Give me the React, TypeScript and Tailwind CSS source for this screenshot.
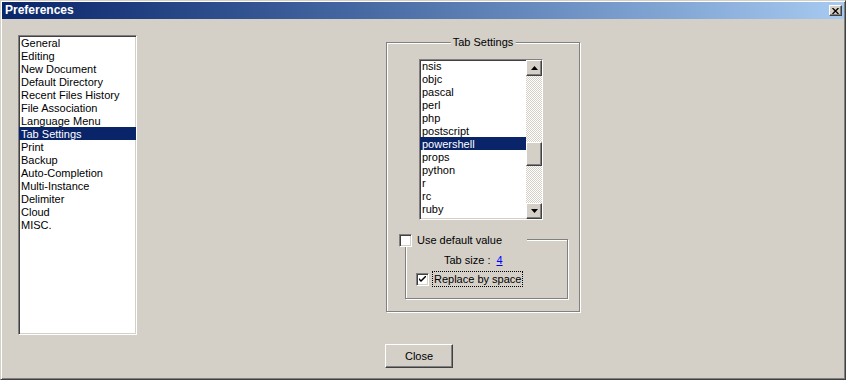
import React from 'react';

const CATEGORIES = [
  'General', 'Editing', 'New Document', 'Default Directory', 'Recent Files History',
  'File Association', 'Language Menu', 'Tab Settings', 'Print', 'Backup',
  'Auto-Completion', 'Multi-Instance', 'Delimiter', 'Cloud', 'MISC.',
];

const LANGS = ['nsis', 'objc', 'pascal', 'perl', 'php', 'postscript', 'powershell', 'props', 'python', 'r', 'rc', 'ruby'];

// classic raised / sunken 3d edges
const raised = 'border border-t-white border-l-white border-r-[#404040] border-b-[#404040] shadow-[inset_-1px_-1px_0_#808080] bg-[#d4d0c8]';
const sunken = 'border border-t-[#808080] border-l-[#808080] border-r-white border-b-white shadow-[inset_1px_1px_0_#404040,inset_-1px_-1px_0_#d4d0c8]';
const etched = 'border border-[#808080] shadow-[inset_1px_1px_0_#fff,1px_1px_0_#fff]';
const checker = 'bg-[image:repeating-conic-gradient(#fff_0_25%,#d4d0c8_0_50%)] bg-[length:2px_2px]';

const Arrow = ({ up }: { up?: boolean }) => (
  <svg width="7" height="4" viewBox="0 0 7 4" className="block">
    {up ? <path d="M3.5 0 L7 4 L0 4 Z" fill="#000" /> : <path d="M0 0 L7 0 L3.5 4 Z" fill="#000" />}
  </svg>
);

const CheckBox = ({ checked }: { checked?: boolean }) => (
  <div className={`w-[13px] h-[13px] bg-white ${sunken} flex items-center justify-center shrink-0`}>
    {checked && (
      <svg width="7" height="7" viewBox="0 0 7 7" className="block">
        <path d="M0 2 L0 4 L2 6 L7 1 L7 -1 L2 4 Z" fill="#000" />
      </svg>
    )}
  </div>
);

export default function App() {
  return (
    <div className="w-[846px] h-[380px] bg-[#d4d0c8] border border-t-[#d4d0c8] border-l-[#d4d0c8] border-r-[#404040] border-b-[#404040] shadow-[inset_1px_1px_0_#fff,inset_-1px_-1px_0_#808080] p-[1px] flex flex-col font-['Liberation_Sans',Arial,sans-serif] text-[11px] text-black leading-[13px] overflow-hidden">
      {/* Title bar */}
      <div className="h-[17px] flex items-center justify-between bg-gradient-to-r from-[#0a246a] to-[#a6caf0] pl-[3px] pr-[2px]">
        <span className="text-white font-bold text-[12px] leading-[15px]">Preferences</span>
        <div className={`w-[13px] h-[11px] ${raised} flex items-center justify-center`}>
          <svg width="7" height="6" viewBox="0 0 7 6" className="block">
            <path d="M0.5 0 L6.5 6 M6.5 0 L0.5 6" stroke="#000" strokeWidth="1.3" />
          </svg>
        </div>
      </div>

      <div className="flex pt-[16px] pl-[16px]">
        {/* Category list */}
        <div className={`w-[119px] h-[300px] bg-white ${sunken} shrink-0`}>
          {CATEGORIES.map(c => (
            <div
              key={c}
              className={`h-[13px] pt-[1px] leading-[12px] pl-[2px] whitespace-nowrap ${c === 'Tab Settings' ? 'bg-[#0a246a] text-white' : ''}`}
            >
              {c}
            </div>
          ))}
        </div>

        <div className="ml-[249px] flex flex-col">
          {/* Tab Settings group */}
          <div className={`relative mt-[7px] w-[194px] h-[270px] ${etched} pt-[16px]`}>
            <span className="absolute -top-[7px] left-1/2 -translate-x-1/2 bg-[#d4d0c8] px-[2px] whitespace-nowrap">Tab Settings</span>

            <div className={`ml-[32px] w-[124px] h-[161px] bg-white ${sunken} flex`}>
              <div className="flex-1 overflow-hidden">
                <div className="-mt-[1px]">
                  {LANGS.map(l => (
                    <div key={l} className={`h-[13px] pt-[1px] leading-[12px] pl-[2px] ${l === 'powershell' ? 'bg-[#0a246a] text-white' : ''}`}>
                      {l}
                    </div>
                  ))}
                </div>
              </div>
              <div className="w-[16px] flex flex-col">
                <div className={`h-[16px] ${raised} flex items-center justify-center`}>
                  <Arrow up />
                </div>
                <div className={`flex-1 ${checker} flex flex-col`}>
                  <div className={`mt-[66px] h-[24px] ${raised}`} />
                </div>
                <div className={`h-[16px] ${raised} flex items-center justify-center`}>
                  <Arrow />
                </div>
              </div>
            </div>

            {/* Default value group */}
            <div className={`relative ml-[18px] mt-[19px] w-[163px] h-[60px] ${etched} pt-[14px]`}>
              <div className="absolute -top-[7px] -left-[8px] w-[129px] h-[14px] bg-[#d4d0c8] flex items-center gap-[5px] pl-[1px]">
                <CheckBox />
                <span>Use default value</span>
              </div>
              <div className="flex items-center gap-[6px] pl-[38px] h-[13px]">
                <span>Tab size :</span>
                <span className="text-[#0000ff] underline">4</span>
              </div>
              <div className="flex items-center gap-[3px] pl-[10px] mt-[4px] h-[16px]">
                <CheckBox checked />
                <span className="border border-dotted border-black px-[1px] leading-[14px]">Replace by space</span>
              </div>
            </div>
          </div>

          <button className={`mt-[32px] -ml-[1px] w-[68px] h-[24px] ${raised} text-[11px]`}>Close</button>
        </div>
      </div>
    </div>
  );
}
